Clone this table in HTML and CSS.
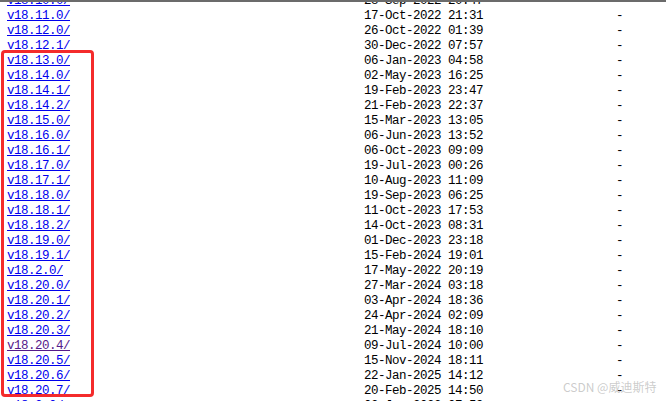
FILE: index.html
```html
<!DOCTYPE html>
<html>
<head>
<meta charset="utf-8">
<title>Index of /dist/</title>
<link rel="stylesheet" href="styles.css">
</head>
<body>
<div class="topbar"></div>
<pre class="listing"><a href="#">v18.10.0/</a>                                          28-Sep-2022 20:47                   -
<a href="#">v18.11.0/</a>                                          17-Oct-2022 21:31                   -
<a href="#">v18.12.0/</a>                                          26-Oct-2022 01:39                   -
<a href="#">v18.12.1/</a>                                          30-Dec-2022 07:57                   -
<a href="#">v18.13.0/</a>                                          06-Jan-2023 04:58                   -
<a href="#">v18.14.0/</a>                                          02-May-2023 16:25                   -
<a href="#">v18.14.1/</a>                                          19-Feb-2023 23:47                   -
<a href="#">v18.14.2/</a>                                          21-Feb-2023 22:37                   -
<a href="#">v18.15.0/</a>                                          15-Mar-2023 13:05                   -
<a href="#">v18.16.0/</a>                                          06-Jun-2023 13:52                   -
<a href="#">v18.16.1/</a>                                          06-Oct-2023 09:09                   -
<a href="#">v18.17.0/</a>                                          19-Jul-2023 00:26                   -
<a href="#">v18.17.1/</a>                                          10-Aug-2023 11:09                   -
<a href="#">v18.18.0/</a>                                          19-Sep-2023 06:25                   -
<a href="#">v18.18.1/</a>                                          11-Oct-2023 17:53                   -
<a href="#">v18.18.2/</a>                                          14-Oct-2023 08:31                   -
<a href="#">v18.19.0/</a>                                          01-Dec-2023 23:18                   -
<a href="#">v18.19.1/</a>                                          15-Feb-2024 19:01                   -
<a href="#">v18.2.0/</a>                                           17-May-2022 20:19                   -
<a href="#">v18.20.0/</a>                                          27-Mar-2024 03:18                   -
<a href="#">v18.20.1/</a>                                          03-Apr-2024 18:36                   -
<a href="#">v18.20.2/</a>                                          24-Apr-2024 02:09                   -
<a href="#">v18.20.3/</a>                                          21-May-2024 18:10                   -
<a href="#" class="visited">v18.20.4/</a>                                          09-Jul-2024 10:00                   -
<a href="#">v18.20.5/</a>                                          15-Nov-2024 18:11                   -
<a href="#">v18.20.6/</a>                                          22-Jan-2025 14:12                   -
<a href="#">v18.20.7/</a>                                          20-Feb-2025 14:50                   -
<a href="#">v18.3.0/</a>                                           02-Jun-2022 07:59                   -
</pre>
<div class="highlight"></div>
<div class="watermark">CSDN @威迪斯特</div>
</body>
</html>
```
FILE: styles.css
```css
html, body {
  margin: 0;
  padding: 0;
  background: #ffffff;
  overflow: hidden;
}

body {
  width: 666px;
  height: 401px;
  position: relative;
}

.topbar {
  position: fixed;
  top: 0;
  left: 0;
  right: 0;
  height: 2px;
  background: #6b6b6b;
  z-index: 3;
}

.listing {
  margin: -6px 0 0 0;
  padding: 0 0 0 7px;
  font-family: "Liberation Mono", "DejaVu Sans Mono", monospace;
  font-size: 12.5px;
  letter-spacing: -0.5px;
  line-height: 15px;
  color: #000000;
}

.listing a {
  color: #0000ee;
  text-decoration: underline;
}

.listing a.visited {
  color: #551a8b;
}

.highlight {
  position: absolute;
  left: 1px;
  top: 50px;
  width: 87px;
  height: 341px;
  border: 3px solid #f42b2b;
  border-radius: 4px;
  z-index: 2;
}

.watermark {
  position: absolute;
  left: 563px;
  top: 379px;
  font-family: "Noto Sans CJK SC", "Noto Sans", sans-serif;
  font-size: 12px;
  line-height: 16px;
  color: rgba(160, 160, 160, 0.55);
  white-space: nowrap;
  z-index: 1;
}
```
